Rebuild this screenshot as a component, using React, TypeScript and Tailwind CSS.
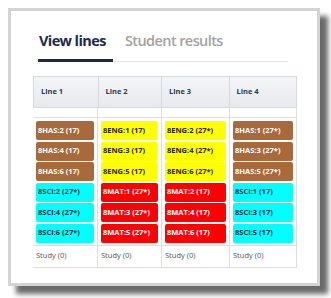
import React from 'react';

type Block = { label: string; color: 'brown' | 'yellow' | 'cyan' | 'red' };

const columns: { title: string; width: string; blocks: Block[] }[] = [
  {
    title: 'Line 1',
    width: 'w-[65px]',
    blocks: [
      { label: '8HAS:2 (17)', color: 'brown' },
      { label: '8HAS:4 (17)', color: 'brown' },
      { label: '8HAS:6 (17)', color: 'brown' },
      { label: '8SCI:2 (27*)', color: 'cyan' },
      { label: '8SCI:4 (27*)', color: 'cyan' },
      { label: '8SCI:6 (27*)', color: 'cyan' },
    ],
  },
  {
    title: 'Line 2',
    width: 'w-[64px]',
    blocks: [
      { label: '8ENG:1 (17)', color: 'yellow' },
      { label: '8ENG:3 (17)', color: 'yellow' },
      { label: '8ENG:5 (17)', color: 'yellow' },
      { label: '8MAT:1 (27*)', color: 'red' },
      { label: '8MAT:3 (27*)', color: 'red' },
      { label: '8MAT:5 (27*)', color: 'red' },
    ],
  },
  {
    title: 'Line 3',
    width: 'w-[68px]',
    blocks: [
      { label: '8ENG:2 (27*)', color: 'yellow' },
      { label: '8ENG:4 (27*)', color: 'yellow' },
      { label: '8ENG:6 (27*)', color: 'yellow' },
      { label: '8MAT:2 (17)', color: 'red' },
      { label: '8MAT:4 (17)', color: 'red' },
      { label: '8MAT:6 (17)', color: 'red' },
    ],
  },
  {
    title: 'Line 4',
    width: 'w-[67px]',
    blocks: [
      { label: '8HAS:1 (27*)', color: 'brown' },
      { label: '8HAS:3 (27*)', color: 'brown' },
      { label: '8HAS:5 (27*)', color: 'brown' },
      { label: '8SCI:1 (17)', color: 'cyan' },
      { label: '8SCI:3 (17)', color: 'cyan' },
      { label: '8SCI:5 (17)', color: 'cyan' },
    ],
  },
];

const blockStyle = {
  brown: 'bg-[#a96a3b] text-white',
  yellow: 'bg-[#ffff00] text-[#222]',
  cyan: 'bg-[#00ffff] text-[#1a2a3a]',
  red: 'bg-[#ff0000] text-white',
};

function App() {
  return (
    <div className="w-[331px] h-[298px] bg-white pt-[8px] pl-[8px] font-['Open_Sans',sans-serif]">
      <div className="w-[312px] h-[278px] border-[3px] border-[#d3d3d3] bg-white shadow-[8px_8px_5px_#6a6a6a]">
        {/* tabs */}
        <div className="ml-[27px] mt-[20px] w-[250px] flex items-end border-b border-[#e4e4e4]">
          <div className="w-[75px] -mb-[1px] border-b-[3px] border-[#1c2b4a] pb-[8px] pl-[1px] text-[14.5px] leading-[20px] font-bold text-[#1c2b4a] tracking-[-0.6px] whitespace-nowrap">
            View lines
          </div>
          <div className="ml-[12px] pb-[10px] text-[14.5px] leading-[20px] font-semibold text-[#a3a3a3] tracking-[-0.6px] whitespace-nowrap">
            Student results
          </div>
        </div>

        {/* table */}
        <div className="ml-[22px] mt-[14px] w-[264px]">
          <div className="flex h-[32px] border border-[#d6d9de] bg-gradient-to-b from-[#f4f5f7] to-[#e7e9ed]">
            {columns.map((col, i) => (
              <div
                key={col.title}
                className={`${col.width} ${i < 3 ? 'border-r border-[#d6d9de]' : ''} flex items-center pl-[7px] text-[7.5px] font-bold text-[#2c3a55]`}
              >
                {col.title}
              </div>
            ))}
          </div>
          <div className="flex">
            {columns.map((col) => (
              <div key={col.title} className={`${col.width} border-r border-[#dedede] flex flex-col`}>
                <div className="h-[10px] border-b border-[#e2e2e2]" />
                <div className="flex flex-col gap-[1.5px] px-[3px] pt-[3px] pb-[2px] border-b border-[#dedede]">
                  {col.blocks.map((b) => (
                    <div
                      key={b.label}
                      className={`${blockStyle[b.color]} h-[19px] rounded-[2px] flex items-center pl-[2px] text-[7.5px] font-bold whitespace-nowrap`}
                    >
                      {b.label}
                    </div>
                  ))}
                </div>
                <div className="h-[22px] border-b border-[#dedede] flex items-center pl-[3px] text-[7.5px] text-[#555]">
                  Study (0)
                </div>
              </div>
            ))}
          </div>
        </div>
      </div>
    </div>
  );
}

export default App;
